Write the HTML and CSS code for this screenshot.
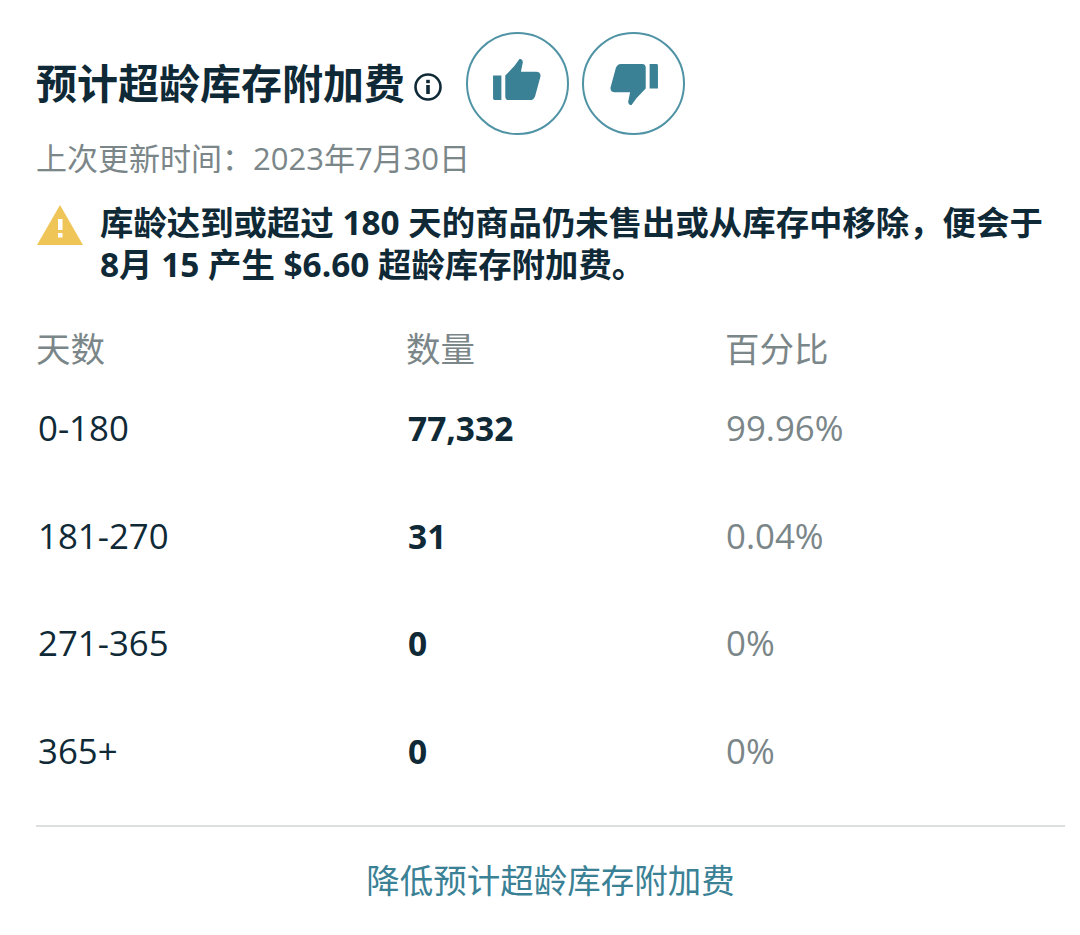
FILE: index.html
```html
<!DOCTYPE html>
<html lang="zh-CN">
<head>
<meta charset="utf-8">
<title>预计超龄库存附加费</title>
<link rel="stylesheet" href="styles.css">
</head>
<body>
<main class="card">
  <header class="head">
    <h1 class="title">预计超龄库存附加费</h1>
    <svg class="info" viewBox="0 0 30 30" aria-hidden="true"><circle cx="15" cy="15" r="12.5" fill="none" stroke="#0f2a36" stroke-width="2.6"/><rect x="13.2" y="13" width="3.6" height="9" fill="#0f2a36"/><rect x="13.2" y="7.8" width="3.6" height="3.4" fill="#0f2a36"/></svg>
    <div class="votes">
      <button class="vote"><svg viewBox="0 0 50 44" class="thumb thumb-up"><path d="M0 17h8.500v25H1.500a1.500 1.500 0 0 1-1.500-1.500z M12.500 17 L22 7 L27 0 Q30 -.5 30.500 3 L28.500 13 H44 Q49 13 48.500 18 L43 38 Q41.500 42 38 42 H16 Q12.500 42 12.500 38z" fill="#3a8195"/></svg></button>
      <button class="vote"><svg viewBox="0 0 50 44" class="thumb flip"><path d="M0 17h8.500v25H1.500a1.500 1.500 0 0 1-1.500-1.500z M12.500 17 L22 7 L27 0 Q30 -.5 30.500 3 L28.500 13 H44 Q49 13 48.500 18 L43 38 Q41.500 42 38 42 H16 Q12.500 42 12.500 38z" fill="#3a8195"/></svg></button>
    </div>
  </header>
  <p class="updated">上次更新时间：2023年7月30日</p>
  <div class="alert">
    <svg class="warn" viewBox="0 0 46 40" aria-hidden="true"><path d="M23 0 L46 40 H0z" fill="#f0c557"/><rect x="21" y="14" width="4.500" height="11" fill="#fff"/><rect x="21" y="28" width="4.500" height="4.500" fill="#fff"/></svg>
    <p class="alert-text">库龄达到或超过 180 天的商品仍未售出或从库存中移除，便会于8月 15 产生 $6.60 超龄库存附加费。</p>
  </div>
  <div class="table">
    <div class="row head-row"><span>天数</span><span>数量</span><span>百分比</span></div>
    <div class="row"><span class="days">0-180</span><b>77,332</b><span class="pct">99.96%</span></div>
    <div class="row"><span class="days">181-270</span><b>31</b><span class="pct">0.04%</span></div>
    <div class="row"><span class="days">271-365</span><b>0</b><span class="pct">0%</span></div>
    <div class="row"><span class="days">365+</span><b>0</b><span class="pct">0%</span></div>
  </div>
  <footer class="foot"><a href="#">降低预计超龄库存附加费</a></footer>
</main>
</body>
</html>
```
FILE: styles.css
```css
* { box-sizing: border-box; }
html, body { margin: 0; background: #fff; }
body { font-family: "Open Sans", "Noto Sans CJK SC", sans-serif; color: #0f2a36; }
.card { width: 1080px; height: 935px; padding: 32px 15px 0 36px; overflow: hidden; }
.head { display: flex; align-items: center; height: 103px; }
.title { margin: -2px 0 0; font-size: 41px; line-height: 50px; font-weight: 700; white-space: nowrap; letter-spacing: 0; }
.info { width: 30px; height: 30px; margin-left: 8px; margin-top: 6px; }
.votes { display: flex; gap: 13px; margin-left: 23px; }
.vote { width: 103px; height: 103px; padding: 0; border: 2px solid #4f93a5; border-radius: 50%; background: #fff; display: flex; align-items: center; justify-content: center; }
.thumb { width: 49px; height: 43px; }
.thumb-up { margin-bottom: 7px; }
.flip { transform: rotate(180deg); }
.updated { margin: 3px 0 0; font-size: 31px; line-height: 40px; color: #7b8689; white-space: nowrap; }
.alert { display: flex; gap: 16px; margin-top: 24px; }
.warn { width: 46px; height: 40px; margin: 3px 0 0 1px; flex: none; }
.alert-text { margin: 0 0 0 1px; font-size: 33.400px; line-height: 41.500px; font-weight: 700; width: 950px; }
.table { margin-top: 38px; }
.row { display: grid; grid-template-columns: 370px 318px 1fr; font-size: 34.800px; line-height: 44px; height: 107.500px; padding-left: 2px; }
.row b { font-weight: 700; font-size: 33.500px; }
.head-row { height: 83px; color: #7b8689; font-size: 34.500px; padding-left: 0; padding-top: 4px; }
.head-row span:last-child { margin-left: 1px; }
.pct { color: #7b8689; }
.foot { border-top: 2px solid #dcdfe0; margin-top: -11px; padding-top: 30px; text-align: center; }
.foot a { color: #3a8195; text-decoration: none; font-size: 33.500px; line-height: 46px; }
```
